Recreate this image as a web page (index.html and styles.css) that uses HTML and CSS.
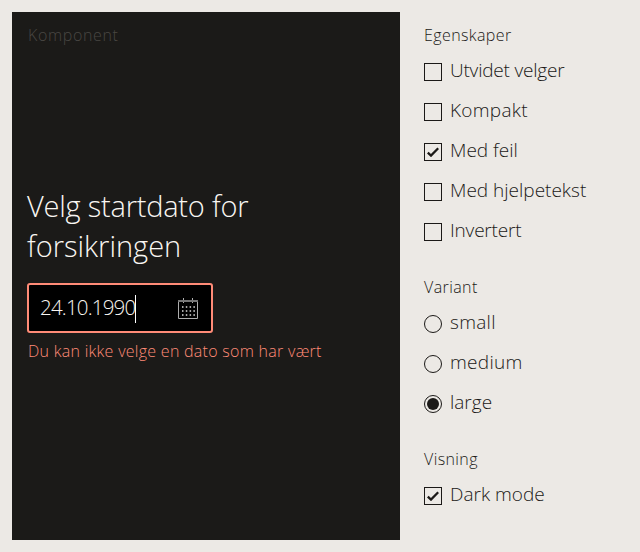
FILE: index.html
```html
<!DOCTYPE html>
<html lang="nb">
<head>
<meta charset="utf-8">
<title>Datovelger</title>
<link rel="stylesheet" href="styles.css">
</head>
<body>
<main class="example">
  <section class="preview">
    <p class="caption">Komponent</p>
    <div class="datepicker">
      <label class="title" for="date">Velg startdato for<br><span class="wide">forsikringen</span></label>
      <div class="field">
        <span class="value" id="date">24.10.1990</span><span class="caret"></span>
        <svg class="calendar" width="20" height="21" viewBox="0 0 20 21" fill="none" stroke="#adadad">
          <path d="M.5 3v17.500h19V3M5.500 0v5M14.500 0v5"/>
          <path d="M0 3h20" stroke="#777" stroke-width="2"/>
          <path d="M4 9h13M4 13h13M4 17h13" stroke="#ddd" stroke-width="1.500" stroke-dasharray="1.500 2.300"/>
        </svg>
      </div>
      <p class="error">Du kan ikke velge en dato som har vært</p>
    </div>
  </section>
  <aside class="options">
    <section class="group">
      <h2 class="heading">Egenskaper</h2>
      <div class="option"><span class="box"></span><span class="name tight">Utvidet velger</span></div>
      <div class="option"><span class="box"></span><span class="name loose">Kompakt</span></div>
      <div class="option"><span class="box"><svg class="check" width="12" height="10" viewBox="0 0 12 10"><path d="M.8 5.600 4 8.600 11.200 1.200"/></svg></span><span class="name">Med feil</span></div>
      <div class="option"><span class="box"></span><span class="name">Med hjelpetekst</span></div>
      <div class="option"><span class="box"></span><span class="name tight">Invertert</span></div>
    </section>
    <section class="group">
      <h2 class="heading">Variant</h2>
      <div class="option"><span class="box radio"></span><span class="name loose">small</span></div>
      <div class="option"><span class="box radio"></span><span class="name loose">medium</span></div>
      <div class="option"><span class="box radio"><span class="dot"></span></span><span class="name">large</span></div>
    </section>
    <section class="group">
      <h2 class="heading">Visning</h2>
      <div class="option"><span class="box"><svg class="check" width="12" height="10" viewBox="0 0 12 10"><path d="M.8 5.600 4 8.600 11.200 1.200"/></svg></span><span class="name">Dark mode</span></div>
    </section>
  </aside>
</main>
</body>
</html>
```

FILE: styles.css
```css
* { box-sizing: border-box; }
body {
  margin: 0;
  background: #ece9e5;
  color: #1b1917;
  font-family: "Open Sans", "Liberation Sans", sans-serif;
  font-weight: 300;
}
p, h2 { margin: 0; font-weight: 300; }
.example { display: flex; height: 552px; padding: 12px; }
.preview { width: 388px; background: #1b1a18; padding: 11px 15px; }
.caption { padding-left: 1px; font-size: 16px; line-height: 24px; letter-spacing: 0.65px; color: #494743; }
.datepicker { padding-top: 139px; }
.title { display: block; font-size: 29px; line-height: 40px; letter-spacing: -0.22px; color: #f9f6f2; white-space: nowrap; }
.wide { letter-spacing: 0; }
.field {
  display: flex; align-items: center;
  width: 186px; height: 50px; margin-top: 17px; padding: 0 13px 0 11px;
  border: 2px solid #ff8b77; border-radius: 3px; background: #000;
}
.value { color: #f9f6f2; font-size: 20.500px; letter-spacing: -0.8px; line-height: 28px; margin-top: -2px; }
.caret { width: 1px; height: 28px; background: #fff; margin-top: 2px; }
.calendar { margin-left: auto; }
.error { margin-top: 6px; padding-left: 1px; color: #ff8b77; font-size: 16px; line-height: 24px; letter-spacing: 0.28px; white-space: nowrap; }
.options { padding: 11px 0 0 24px; }
.group { margin-bottom: 24px; }
.heading { margin-bottom: 4px; font-size: 16px; line-height: 24px; letter-spacing: 0.4px; }
.option { display: flex; align-items: center; gap: 8px; height: 40px; }
.box { display: flex; align-items: center; justify-content: center; width: 18px; height: 18px; border: 1px solid #1b1917; margin-top: 12px; align-self: flex-start; }
.radio { border-radius: 50%; }
.dot { width: 12px; height: 12px; border-radius: 50%; background: #1b1917; }
.check { fill: none; stroke: #1b1917; stroke-width: 2.3; }
.name { margin-bottom: 2px; font-size: 19px; line-height: 28px; white-space: nowrap; }
.tight { letter-spacing: -0.2px; }
.loose { letter-spacing: 0.3px; }
```
